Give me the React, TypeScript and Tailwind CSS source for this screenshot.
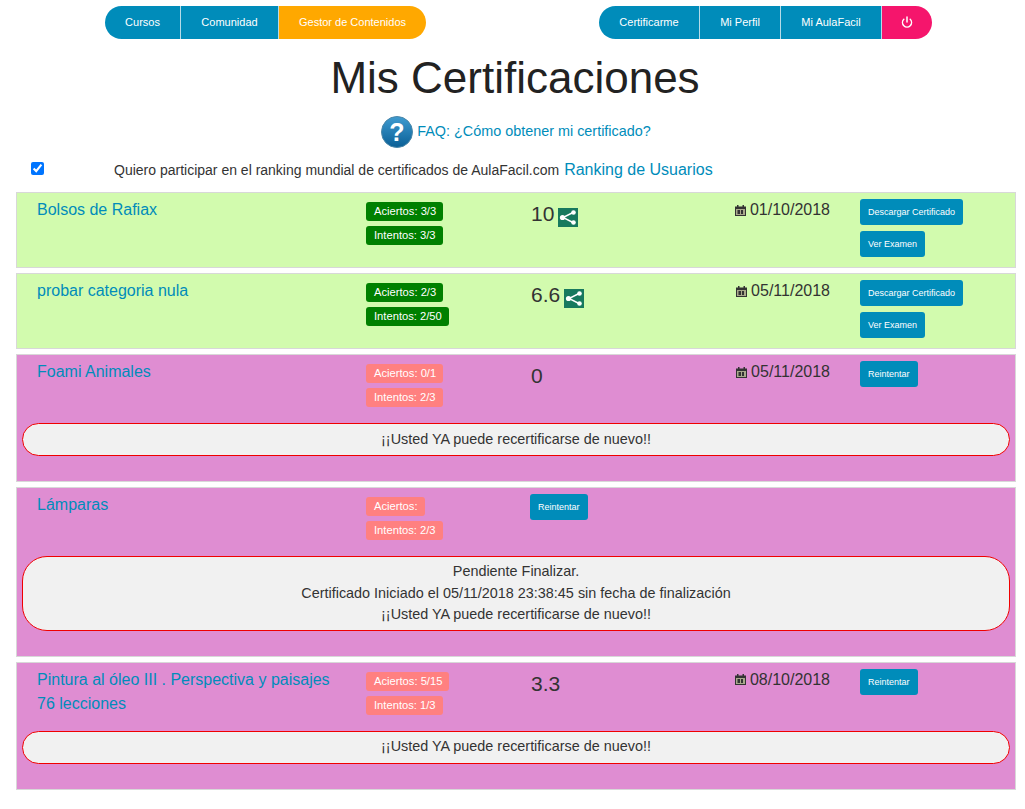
import { Power } from "lucide-react";

type Cert = {
  title: string[];
  aciertos: string;
  intentos: string;
  score?: string;
  share?: boolean;
  date?: string;
  passed: boolean;
  notice?: string[];
};

const certs: Cert[] = [
  { title: ["Bolsos de Rafiax"], aciertos: "Aciertos: 3/3", intentos: "Intentos: 3/3", score: "10", share: true, date: "01/10/2018", passed: true },
  { title: ["probar categoria nula"], aciertos: "Aciertos: 2/3", intentos: "Intentos: 2/50", score: "6.6", share: true, date: "05/11/2018", passed: true },
  { title: ["Foami Animales"], aciertos: "Aciertos: 0/1", intentos: "Intentos: 2/3", score: "0", date: "05/11/2018", passed: false, notice: ["¡¡Usted YA puede recertificarse de nuevo!!"] },
  {
    title: ["Lámparas"],
    aciertos: "Aciertos:",
    intentos: "Intentos: 2/3",
    passed: false,
    notice: ["Pendiente Finalizar.", "Certificado Iniciado el 05/11/2018 23:38:45 sin fecha de finalización", "¡¡Usted YA puede recertificarse de nuevo!!"],
  },
  { title: ["Pintura al óleo III . Perspectiva y paisajes", "76 lecciones"], aciertos: "Aciertos: 5/15", intentos: "Intentos: 1/3", score: "3.3", date: "08/10/2018", passed: false, notice: ["¡¡Usted YA puede recertificarse de nuevo!!"] },
];

function ShareIcon() {
  return (
    <svg viewBox="0 0 20 19" className="ml-[4px] inline-block h-[19px] w-5 bg-[#17795e] align-[-6px]">
      <path d="M15 4.5 L5 9.5 L15 14.5" fill="none" stroke="white" strokeWidth="1.4" />
      <circle cx="15.5" cy="4.5" r="2.3" fill="white" />
      <circle cx="4.5" cy="9.5" r="2.6" fill="white" />
      <circle cx="15.5" cy="14.5" r="2.3" fill="white" />
    </svg>
  );
}

function CalendarIcon() {
  return (
    <svg viewBox="0 0 11 11" className="h-[11px] w-[11px]">
      <path d="M0 1.5H2V0H3.5V1.5H7.5V0H9V1.5H11V11H0Z" fill="#333" />
      <rect x="1" y="4" width="9" height="6" fill="#a9a98c" />
      <rect x="2.5" y="5" width="2.5" height="4" fill="#333" />
      <rect x="6" y="5" width="2" height="4" fill="#333" />
    </svg>
  );
}

function ActionButton({ label }: { label: string }) {
  return <a className="block w-fit rounded-[3px] bg-[#008cba] px-2 py-[7px] text-[9px] leading-3 text-white">{label}</a>;
}

function Badge({ label, passed }: { label: string; passed: boolean }) {
  return (
    <span className={`block w-fit rounded-[3px] py-[3px] pl-2 pr-[7px] text-[11.2px] leading-[13px] text-white ${passed ? "bg-[#008000]" : "bg-[#ff8080]"}`}>
      {label}
    </span>
  );
}

function CertRow({ cert }: { cert: Cert }) {
  return (
    <div className={`border border-[#d8d8d8] px-[5px] ${cert.passed ? "bg-[#d2fbae]" : "bg-[#df8dd2] pb-[25px]"}`}>
      <div className={`flex ${cert.passed ? "h-[74px]" : "h-[68px]"}`}>
        <div className="w-[344px] pl-[15px] pt-[5px] text-base leading-6 text-[#008cba]">
          {cert.title.map((line) => (
            <div key={line}>{line}</div>
          ))}
        </div>
        <div className="flex w-[164px] flex-col gap-[5px] pt-[9px]">
          <Badge label={cert.aciertos} passed={cert.passed} />
          <Badge label={cert.intentos} passed={cert.passed} />
        </div>
        {cert.score ? (
          <div className="w-[200px] pl-px pt-[9px] text-[21px] leading-6 text-[#333]">
            {cert.score}
            {cert.share && <ShareIcon />}
          </div>
        ) : (
          <div className="w-[200px] pt-[5px]">
            <span className="inline-block">
              <ActionButton label="Reintentar" />
            </span>
          </div>
        )}
        <div className="w-[100px] pt-[5px] text-right text-base leading-6 text-[#333]">
          {cert.date && (
            <span className="inline-flex items-center gap-[4px]">
              <CalendarIcon />
              {cert.date}
            </span>
          )}
        </div>
        <div className="ml-[30px] flex flex-col gap-[6px] pt-[6px]">
          {cert.passed ? (
            <>
              <ActionButton label="Descargar Certificado" />
              <ActionButton label="Ver Examen" />
            </>
          ) : cert.score ? (
            <ActionButton label="Reintentar" />
          ) : null}
        </div>
      </div>
      {cert.notice && (
        <div className={`flex min-h-[33px] flex-col justify-center border border-[#f00000] bg-[#f1f1f1] py-1 text-center text-[14.4px] leading-[21.6px] text-[#333] ${cert.notice.length > 1 ? "rounded-[25px]" : "rounded-[17px]"}`}>
          {cert.notice.map((line) => (
            <div key={line}>{line}</div>
          ))}
        </div>
      )}
    </div>
  );
}

export default function App() {
  return (
    <div className="min-h-[809px] bg-white font-['Liberation_Sans',Arial,sans-serif] text-[#222]">
      <nav className="flex justify-between pl-[105px] pr-[93px] pt-[6px]">
        <div className="flex h-[33px] overflow-hidden rounded-[17px] text-center text-[11px] leading-[33px] text-white">
          <a className="w-[76px] border-r border-[#b5dbe8] bg-[#008cba]">Cursos</a>
          <a className="w-[98px] border-r border-[#b5dbe8] bg-[#008cba]">Comunidad</a>
          <a className="w-[147px] bg-[#ffa800]">Gestor de Contenidos</a>
        </div>
        <div className="flex h-[33px] overflow-hidden rounded-[17px] text-center text-[11px] leading-[33px] text-white">
          <a className="w-[101px] border-r border-[#b5dbe8] bg-[#008cba]">Certificarme</a>
          <a className="w-[81px] border-r border-[#b5dbe8] bg-[#008cba]">Mi Perfil</a>
          <a className="w-[101px] border-r border-[#b5dbe8] bg-[#008cba]">Mi AulaFacil</a>
          <a className="flex w-[50px] items-center justify-center bg-[#f5156c]">
            <Power size={12} strokeWidth={3} className="mb-[2px]" />
          </a>
        </div>
      </nav>

      <h1 className="ml-[5px] mt-[10px] text-center text-[44px] leading-[57px]">Mis Certificaciones</h1>

      <div className="ml-[7px] mt-[10px] flex items-center justify-center gap-[4px] text-[14.4px] text-[#008cba]">
        <svg viewBox="0 0 32 32" className="h-8 w-8">
          <defs>
            <linearGradient id="faq" x1="0" y1="0" x2="0" y2="1">
              <stop offset="0" stopColor="#3f9bd0" />
              <stop offset="1" stopColor="#0a5f96" />
            </linearGradient>
          </defs>
          <circle cx="16" cy="16" r="15.5" fill="url(#faq)" stroke="#4a86a8" />
          <text x="16" y="25" textAnchor="middle" fontSize="25" fontWeight="700" fill="white" fontFamily="Liberation Sans">?</text>
        </svg>
        <a>FAQ: ¿Cómo obtener mi certificado?</a>
      </div>

      <div className="mt-[10px] flex h-[24px] items-center pl-[31px]">
        <input type="checkbox" defaultChecked className="mb-[3px] h-[13px] w-[13px]" />
        <span className="ml-[70px] text-sm text-[#333]">Quiero participar en el ranking mundial de certificados de AulaFacil.com</span>
        <a className="ml-[5px] text-base text-[#008cba]">Ranking de Usuarios</a>
      </div>

      <div className="ml-4 mr-[9px] mt-[10px] flex flex-col gap-[5px]">
        {certs.map((cert) => (
          <CertRow key={cert.title[0]} cert={cert} />
        ))}
      </div>
    </div>
  );
}
